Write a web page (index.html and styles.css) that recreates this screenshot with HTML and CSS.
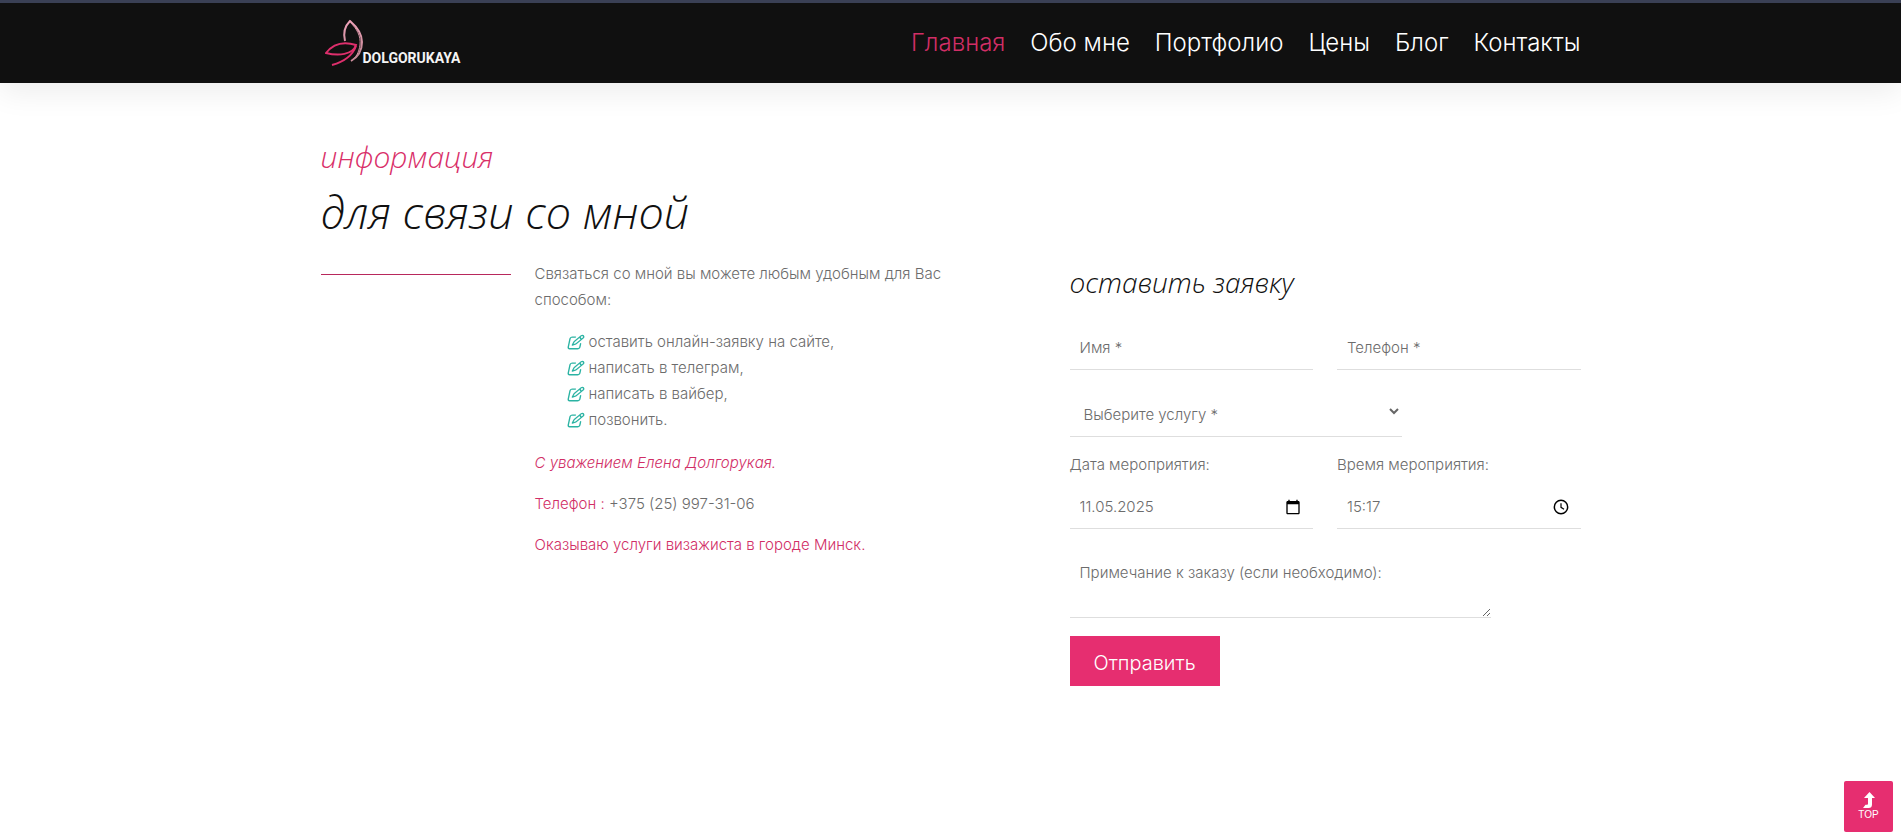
FILE: index.html
```html
<!DOCTYPE html>
<html lang="ru">
<head>
<meta charset="utf-8">
<meta name="viewport" content="width=device-width, initial-scale=1">
<title>Контакты</title>
<link rel="stylesheet" href="styles.css">
</head>
<body>
<svg width="0" height="0" class="sprite" aria-hidden="true">
  <symbol id="pen" viewBox="-60 0 620 512"><path transform="translate(50 0) skewX(-12)" d="M441 58.9L453.1 71c9.4 9.4 9.4 24.6 0 33.9L424 134.1 377.9 88 407 58.9c9.4-9.4 24.6-9.4 33.9 0zM209.8 256.2L344 121.9 390.1 168 255.8 302.2c-2.9 2.9-6.5 5-10.4 6.1l-58.5 16.7 16.7-58.5c1.1-3.9 3.2-7.5 6.1-10.4zM373.1 25L175.8 222.2c-8.7 8.7-15 19.4-18.3 31.1l-28.6 100c-2.4 8.4-.1 17.4 6.1 23.6s15.2 8.5 23.6 6.1l100-28.6c11.8-3.4 22.5-9.7 31.1-18.3L487 138.9c28.1-28.1 28.1-73.7 0-101.8L474.9 25C446.8-3.1 401.2-3.1 373.1 25zM88 64C39.4 64 0 103.4 0 152V424c0 48.6 39.4 88 88 88H360c48.6 0 88-39.4 88-88V312c0-13.3-10.7-24-24-24s-24 10.7-24 24V424c0 22.1-17.9 40-40 40H88c-22.1 0-40-17.9-40-40V152c0-22.1 17.9-40 40-40H200c13.3 0 24-10.7 24-24s-10.7-24-24-24H88z"/></symbol>
</svg>
<header class="header">
  <div class="container header-row">
    <a class="logo" href="#">
      <svg class="logo-mark" viewBox="0 0 38 48" aria-hidden="true">
        <defs>
          <linearGradient id="wing" x1="0" y1="0" x2="0" y2="1"><stop offset="0" stop-color="#f0a3ba"/><stop offset="1" stop-color="#b9818c"/></linearGradient>
        </defs>
        <path fill="none" stroke="url(#wing)" stroke-width="2" d="M20 22C18 14 20 7 25 2C32 8 37 14 37 23C37 33 33 38 26 42"/>
        <path fill="none" stroke="#d391a2" stroke-width="1" d="M25 3C32 10 36 17 35 26C34 33 31 39 26 42"/>
        <path fill="none" stroke="#dd2f6c" stroke-width="2" d="M1 34C8 25 18 22 31 26C28 36 13 37 1 34Z"/>
        <path fill="none" stroke="#dd2f6c" stroke-width="2" d="M31 27C27 38 18 43 7 46"/>
      </svg>
      <span class="logo-text">DOLGORUKAYA</span>
    </a>
    <nav class="nav">
      <a class="active" href="#">Главная</a>
      <a href="#">Обо мне</a>
      <a href="#">Портфолио</a>
      <a href="#">Цены</a>
      <a href="#">Блог</a>
      <a href="#">Контакты</a>
    </nav>
  </div>
</header>
<main class="container">
  <div class="title">
    <p class="subtitle">информация</p>
    <h1>для связи со мной</h1>
  </div>
  <div class="grid">
    <div class="rule"></div>
    <section class="info">
      <p class="lead">Связаться со мной вы можете любым удобным для Вас<br>способом:</p>
      <ul>
        <li><svg class="pen"><use href="#pen"/></svg>оставить онлайн-заявку на сайте,</li>
        <li><svg class="pen"><use href="#pen"/></svg>написать в телеграм,</li>
        <li><svg class="pen"><use href="#pen"/></svg>написать в вайбер,</li>
        <li><svg class="pen"><use href="#pen"/></svg>позвонить.</li>
      </ul>
      <p class="pink"><em>С уважением Елена Долгорукая.</em></p>
      <p><span class="pink">Телефон :</span> <a href="tel:+375259973106">+375 (25) 997-31-06</a></p>
      <p class="pink">Оказываю услуги визажиста в городе Минск.</p>
    </section>
    <form class="form">
      <h2>оставить заявку</h2>
      <div class="pair">
        <input class="field" type="text" placeholder="Имя *" aria-label="Имя">
        <input class="field" type="tel" placeholder="Телефон *" aria-label="Телефон">
      </div>
      <div class="select-wrap">
        <select class="field" aria-label="Услуга"><option>Выберите услугу *</option></select>
        <svg class="chevron" viewBox="0 0 10 7" aria-hidden="true"><path d="M1 1l4 4 4-4" fill="none" stroke="#666" stroke-width="2"/></svg>
      </div>
      <div class="pair">
        <div class="group">
          <label for="date">Дата мероприятия:</label>
          <div class="picker">
            <input class="field" id="date" type="text" value="11.05.2025">
            <button type="button" aria-label="Выбрать дату"><svg viewBox="0 0 24 24"><path d="M20 3h-1V1h-2v2H7V1H5v2H4c-1.100 0-2 .9-2 2v16c0 1.100.9 2 2 2h16c1.100 0 2-.9 2-2V5c0-1.100-.9-2-2-2zm0 18H4V8h16v13z"/></svg></button>
          </div>
        </div>
        <div class="group">
          <label for="time">Время мероприятия:</label>
          <div class="picker">
            <input class="field" id="time" type="text" value="15:17">
            <button type="button" aria-label="Выбрать время"><svg viewBox="0 0 24 24"><g fill="none" stroke="#000"><circle cx="12" cy="12" r="10" stroke-width="2.200"/><path d="M12 6.500v6l4.500 3" stroke-width="1.800"/></g></svg></button>
          </div>
        </div>
      </div>
      <textarea class="field note" placeholder="Примечание к заказу (если необходимо):" aria-label="Примечание"></textarea>
      <button class="submit" type="submit">Отправить</button>
    </form>
  </div>
</main>
<a class="top" href="#">
  <svg viewBox="0 0 12 16" aria-hidden="true"><path d="M6.500 0L12 6H9V12.500Q9 16 5.500 16H0L2.500 12.800H4Q5 12.800 5 12V6H1Z" fill="#fff"/></svg>
  <span>TOP</span>
</a>
</body>
</html>
```
FILE: styles.css
```css
* { box-sizing: border-box; }

body {
  margin: 0;
  background: #fff;
  color: #6c6c6c;
  font: 300 15px/26px Inter, "Open Sans", sans-serif;
}

a { color: inherit; text-decoration: none; }
p, h1, h2, ul { margin: 0; }
.sprite { position: absolute; }

.container {
  width: 100%;
  max-width: 1308px;
  margin: 0 auto;
  padding: 0 24px;
}

.header {
  border-top: 3px solid #3a4055;
  background: #101010;
  box-shadow: 0 10px 30px rgba(0, 0, 0, 0.07);
}

.header-row {
  display: flex;
  align-items: center;
  justify-content: space-between;
  height: 80px;
}

.logo { display: flex; align-items: flex-end; padding-left: 4px; }
.logo-mark { width: 38px; height: 48px; }
.logo-text {
  color: #f4f4f4;
  font: 700 14px/18px Roboto, sans-serif;
}

.nav { display: flex; gap: 25px; color: #fff; font-size: 24px; }
.nav .active, .pink { color: #d12e66; }

.title { padding: 52px 0 16px; font-family: "Open Sans", sans-serif; font-style: italic; font-weight: 300; }
.subtitle { color: #d92f69; font-size: 30px; line-height: 44px; }
h1 { color: #101010; font-size: 45px; font-weight: 300; line-height: 66px; }

.grid { display: grid; grid-template-columns: repeat(12, 1fr); column-gap: 24px; }
.rule { grid-column: 1 / span 2; height: 1px; margin-top: 13px; background: #b8285c; }

.info { grid-column: 3 / span 4; }
.info p { margin-bottom: 15px; }
.info .lead { margin-bottom: 16px; white-space: nowrap; }
.info ul { margin-bottom: 17px; padding-left: 32px; list-style: none; }
.info li { display: flex; align-items: center; gap: 4px; }
.pen { width: 18px; height: 16px; fill: #2bb3a3; }

.form { grid-column: 8 / span 5; display: flex; flex-direction: column; align-items: flex-start; }
h2 { margin-bottom: 24px; color: #101010; font: italic 300 28px/42px "Open Sans", sans-serif; }

.pair { display: grid; grid-template-columns: 1fr 1fr; gap: 24px; width: 100%; }
.field {
  width: 100%;
  height: 43px;
  padding: 0 10px 2px;
  border: 0;
  border-bottom: 1px solid #dedede;
  border-radius: 0;
  outline: 0;
  background: none;
  color: #6c6c6c;
  font: inherit;
}
.field::placeholder { color: #6c6c6c; opacity: 1; }

.select-wrap { position: relative; width: 65%; margin: 24px 0 15px; }
select.field { padding: 0 14px; appearance: none; }
.chevron { position: absolute; top: 14px; right: 3px; width: 10px; height: 7px; }

.group { display: flex; flex-direction: column; }
.picker { position: relative; margin-top: 8px; }
.picker button {
  position: absolute;
  top: 13px;
  right: 12px;
  width: 16px;
  height: 16px;
  padding: 0;
  border: 0;
  background: none;
}
.picker svg { display: block; width: 16px; height: 16px; }

.note { width: 421px; max-width: 100%; height: 65px; margin-top: 24px; padding-top: 7px; }

.submit {
  margin-top: 18px;
  padding: 4px 24px 0;
  height: 50px;
  border: 0;
  background: #e62e70;
  color: #fff;
  font: 300 20px/26px Inter, "Open Sans", sans-serif;
}

.top {
  position: fixed;
  right: 8px;
  bottom: 1px;
  display: flex;
  flex-direction: column;
  align-items: center;
  width: 49px;
  height: 51px;
  padding-top: 11px;
  border-radius: 2px;
  background: #e62e70;
  color: #fff;
  font: 400 10px/14px "Liberation Sans", Arial, sans-serif;
}
.top svg { width: 12px; height: 16px; }
```
